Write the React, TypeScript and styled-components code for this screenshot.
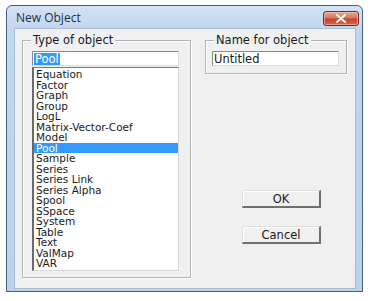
import React from "react";
import styled, { createGlobalStyle } from "styled-components";

const Global = createGlobalStyle`
  html, body { margin: 0; padding: 0; background: #ffffff; }
  * { box-sizing: border-box; }
`;

const Page = styled.div`
  padding: 5px 0 0 6px;
  font-family: "DejaVu Sans", Verdana, sans-serif;
`;

const Window = styled.div`
  width: 357px;
  height: 287px;
  border: 1px solid #44607f;
  border-radius: 6px 6px 0 0;
  background: linear-gradient(180deg, #d3e3f4 0px, #c3d7ee 22px, #bcd2eb 100%);
  display: flex;
  flex-direction: column;
`;

const TitleBar = styled.div`
  height: 22px;
  display: flex;
  align-items: center;
  justify-content: space-between;
  padding: 0 3px 0 9px;
`;

const Title = styled.span`
  font-family: "Open Sans", "Noto Sans", sans-serif;
  font-size: 12px;
  color: #1c2e44;
`;

const CloseButton = styled.div`
  width: 36px;
  height: 15px;
  margin-top: 2px;
  border: 1px solid #7a2a24;
  border-radius: 3px;
  background: linear-gradient(180deg, #e8a492 0%, #d8765f 45%, #c4452e 55%, #d6654c 100%);
  display: flex;
  align-items: center;
  justify-content: center;
  box-shadow: inset 0 0 0 1px rgba(255, 220, 210, 0.5);
`;

const Client = styled.div`
  flex: 1;
  margin: 0 6px 2px 7px;
  background: #f0f0f0;
  border: 1px solid #a8bdd6;
  display: flex;
  padding: 11px 0 0 7px;
  gap: 14px;
`;

const GroupBox = styled.div<{ $w: number; $h: number }>`
  width: ${(p) => p.$w}px;
  height: ${(p) => p.$h}px;
  border: 1px solid #b4b4b4;
  box-shadow: inset 1px 1px 0 #ffffff, 1px 1px 0 #ffffff;
  display: flex;
  flex-direction: column;
`;

const Legend = styled.span`
  align-self: flex-start;
  margin: -8px 0 0 8px;
  padding: 0 2px;
  background: #f0f0f0;
  font-size: 11.5px;
  line-height: 14px;
  color: #1a1a1a;
`;

const GroupBody = styled.div<{ $pad: string }>`
  padding: ${(p) => p.$pad};
  display: flex;
  flex-direction: column;
`;

const Edit = styled.div<{ $w: number }>`
  width: ${(p) => p.$w}px;
  height: 15px;
  background: #fff;
  border-top: 1px solid #8a8a8a;
  border-left: 1px solid #8a8a8a;
  border-right: 1px solid #dcdcdc;
  border-bottom: 1px solid #dcdcdc;
  display: flex;
  align-items: center;
  padding-left: 1px;
  font-size: 11.5px;
  line-height: 12px;
  color: #1a1a1a;
`;

const Selected = styled.span`
  background: #3399ff;
  color: #fff;
  padding: 0 1px;
`;

const List = styled.div`
  width: 147px;
  height: 204px;
  margin-top: 1px;
  background: #fff;
  border-top: 1px solid #7a7a7a;
  border-left: 2px solid #6a6a6a;
  border-right: 1px solid #d8d8d8;
  border-bottom: 1px solid #d8d8d8;
  padding-top: 1px;
  display: flex;
  flex-direction: column;
`;

const Item = styled.div<{ $sel?: boolean }>`
  height: 10.5px;
  line-height: 10.5px;
  font-size: 10.5px;
  padding-left: 2px;
  white-space: nowrap;
  color: ${(p) => (p.$sel ? "#fff" : "#1a1a1a")};
  background: ${(p) => (p.$sel ? "#3399ff" : "transparent")};
`;

const RightCol = styled.div`
  display: flex;
  flex-direction: column;
`;

const ButtonCol = styled.div`
  display: flex;
  flex-direction: column;
  gap: 18px;
  margin: 116px 0 0 37px;
`;

const Button = styled.div`
  width: 79px;
  height: 18px;
  background: #f0f0f0;
  border-top: 1px solid #e0e0e0;
  border-left: 1px solid #e0e0e0;
  border-right: 2px solid #707070;
  border-bottom: 2px solid #707070;
  box-shadow: inset 1px 1px 0 #ffffff;
  display: flex;
  align-items: center;
  justify-content: center;
  font-size: 11.5px;
  color: #1a1a1a;
`;

const items = [
  "Equation",
  "Factor",
  "Graph",
  "Group",
  "LogL",
  "Matrix-Vector-Coef",
  "Model",
  "Pool",
  "Sample",
  "Series",
  "Series Link",
  "Series Alpha",
  "Spool",
  "SSpace",
  "System",
  "Table",
  "Text",
  "ValMap",
  "VAR",
];

export default function App() {
  return (
    <>
      <Global />
      <Page>
        <Window>
          <TitleBar>
            <Title>New Object</Title>
            <CloseButton>
              <svg width="12" height="9" viewBox="0 0 12 9">
                <path d="M2 1 L10 8 M10 1 L2 8" stroke="#fff" strokeWidth="2" strokeLinecap="round" />
              </svg>
            </CloseButton>
          </TitleBar>
          <Client>
            <GroupBox $w={169} $h={238}>
              <Legend>Type of object</Legend>
              <GroupBody $pad="4px 0 0 9px">
                <Edit $w={147}>
                  <Selected>Pool</Selected>
                </Edit>
                <List>
                  {items.map((it) => (
                    <Item key={it} $sel={it === "Pool"}>
                      {it}
                    </Item>
                  ))}
                </List>
              </GroupBody>
            </GroupBox>
            <RightCol>
              <GroupBox $w={142} $h={34}>
                <Legend>Name for object</Legend>
                <GroupBody $pad="4px 0 0 6px">
                  <Edit $w={127}>Untitled</Edit>
                </GroupBody>
              </GroupBox>
              <ButtonCol>
                <Button>OK</Button>
                <Button>Cancel</Button>
              </ButtonCol>
            </RightCol>
          </Client>
        </Window>
      </Page>
    </>
  );
}
